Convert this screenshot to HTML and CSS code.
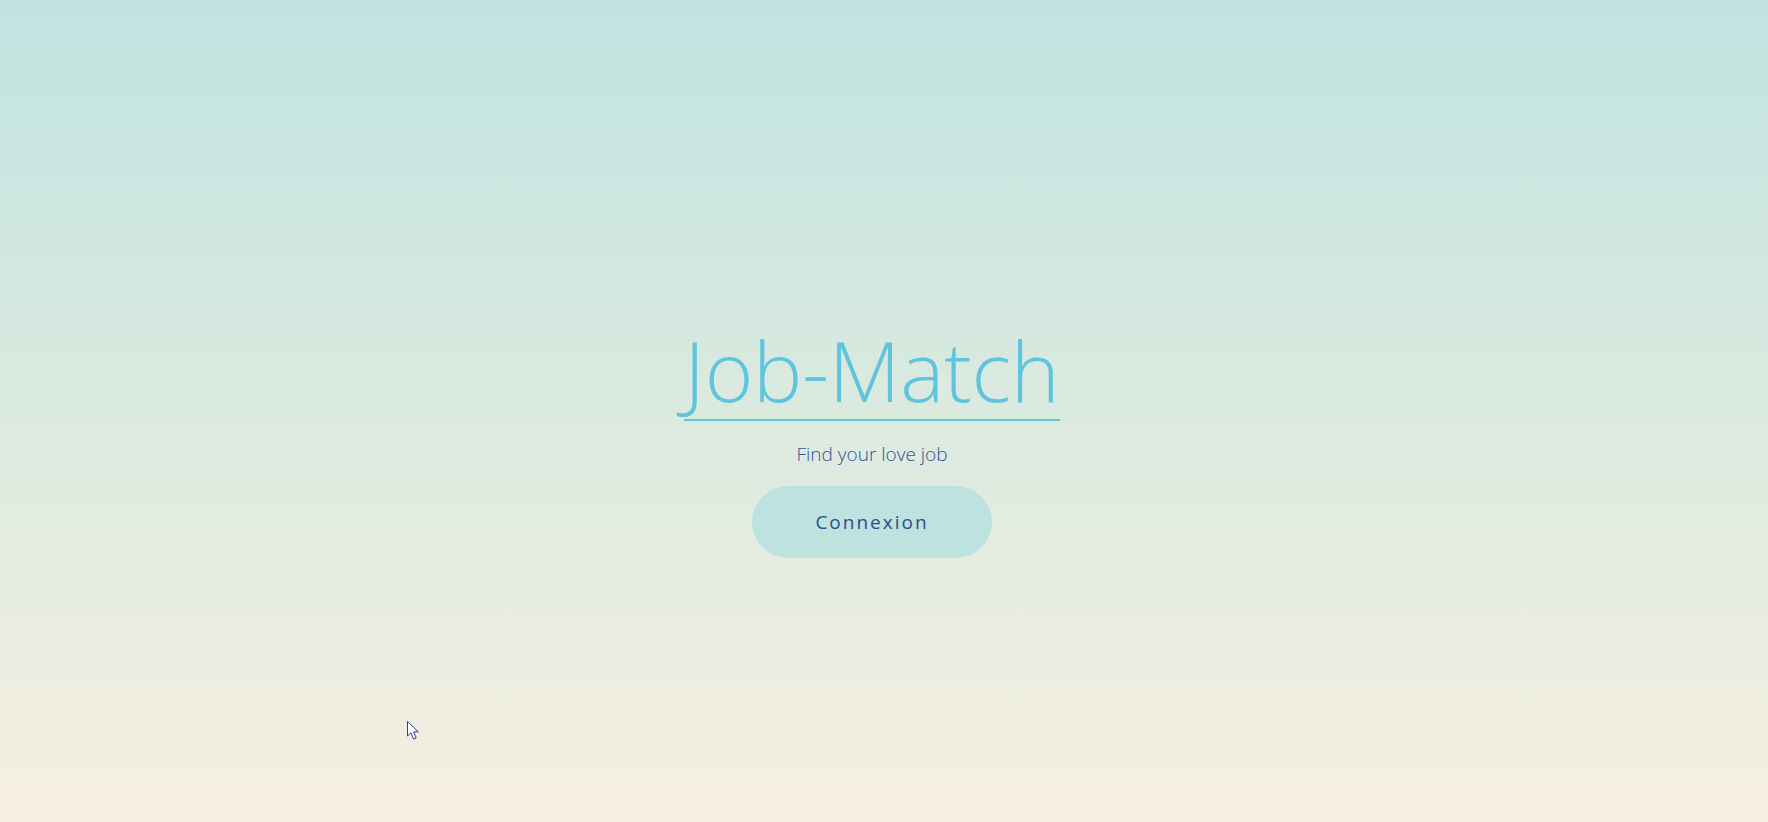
FILE: index.html
```html
<!DOCTYPE html>
<html lang="fr">
<head>
<meta charset="utf-8">
<title>Job-Match</title>
<link rel="stylesheet" href="styles.css">
</head>
<body>
<main class="hero">
  <h1 class="title">Job-Match</h1>
  <p class="tagline">Find your love job</p>
  <a class="btn" href="#">Connexion</a>
</main>
<svg class="cursor" width="13" height="20" viewBox="0 0 13 20" aria-hidden="true">
  <path d="M0.5 0.5 L0.5 15 L4 11.8 L6.6 18 L9.2 16.9 L6.6 10.9 L11.3 10.9 Z" fill="#ffffff" stroke="#24448c" stroke-width="1" stroke-linejoin="miter"/>
</svg>
</body>
</html>
```
FILE: styles.css
```css
html, body {
  margin: 0;
  padding: 0;
  height: 100%;
}
body {
  background: linear-gradient(to bottom, #c0e3e1 0%, #dbeadf 50%, #f6efe1 100%);
  font-family: "Open Sans", "Noto Sans", sans-serif;
  overflow: hidden;
}
.hero {
  display: flex;
  flex-direction: column;
  align-items: center;
  padding-top: 320px;
  padding-right: 24px;
}
.title {
  margin: 0;
  font-weight: 300;
  font-size: 83px;
  line-height: 99px;
  color: #5fc4dc;
  border-bottom: 2px solid #5fc4dc;
  letter-spacing: -0.2px;
}
.tagline {
  margin: 20px 0 0;
  font-weight: 300;
  font-size: 19px;
  line-height: 26px;
  color: #2d5594;
}
.btn {
  margin-top: 19px;
  width: 240px;
  height: 72px;
  border-radius: 36px;
  background: #bde2e0;
  color: #2b4e8c;
  text-decoration: none;
  font-size: 19px;
  letter-spacing: 2px;
  display: flex;
  align-items: center;
  justify-content: center;
}
.cursor {
  position: absolute;
  left: 407px;
  top: 721px;
}
```
